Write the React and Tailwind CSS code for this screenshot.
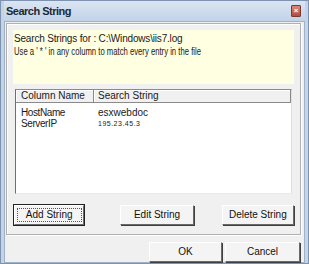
import React from 'react';

const font = "font-['Liberation_Sans',Arial,sans-serif]";

const Btn = ({ label, focused, className = '' }) => (
    <button
        className={`h-[20px] bg-[#f4f4f4] text-[10px] text-[#111] border border-t-[#fff] border-l-[#fff] border-r-[#6a6a6a] border-b-[#6a6a6a] shadow-[1px_1px_0_#404040] flex items-center justify-center ${focused ? 'outline outline-1 outline-[#222]' : ''} ${className}`}
    >
        <span className={focused ? 'border border-dotted border-[#555] px-[8px] leading-[12px]' : 'leading-[12px]'}>{label}</span>
    </button>
);

const App = () => {
    const rows = [
        { name: 'HostName', value: 'esxwebdoc', small: false },
        { name: 'ServerIP', value: '195.23.45.3', small: true },
    ];

    return (
        <div className={`w-[309px] h-[264px] bg-[#c4d4e8] border border-[#7d93b0] flex flex-col px-[3px] pb-[2px] ${font}`}>
            {/* title bar */}
            <div className="h-[20px] shrink-0 flex items-center justify-between pl-[2px] pr-[4px] bg-gradient-to-b from-[#dbe5f2] to-[#c2d3e8]">
                <span className="text-[11px] font-semibold text-[#1c2a3a] tracking-[-0.5px]">Search String</span>
                <div className="w-[10px] h-[12px] bg-gradient-to-b from-[#d98b7e] to-[#b5493a] border border-[#7a3a32] rounded-[1px] flex items-center justify-center">
                    <span className="text-[8px] leading-none text-white font-bold">×</span>
                </div>
            </div>

            {/* body */}
            <div className="flex-1 bg-[#f0f0f0] border border-[#9fb1c7] flex flex-col pt-[1px] pl-[1px] pr-[3px]">
                <div className="border border-[#b0b0b0] shadow-[inset_1px_1px_0_#fff,1px_1px_0_#fff] flex flex-col px-[6px] pt-[6px] pb-[9px]">
                    {/* info panel */}
                    <div className="h-[54px] bg-[#ffffe1] pl-[1px] pt-[2px] text-[10px] leading-[13px] text-[#1a1a1a]">
                        <div className="tracking-[-0.18px]">Search Strings for : C:\Windows\iis7.log</div>
                        <div className="inline-block whitespace-nowrap origin-left scale-x-[0.77]">Use a ' * ' in any column to match every entry in the file</div>
                    </div>

                    {/* list */}
                    <div className="mt-[5px] mx-[2px] h-[105px] bg-white border border-t-[#8a8a8a] border-l-[#6f6f6f] border-r-[#e0e0e0] border-b-[#e8e8e8] flex flex-col">
                        <div className="h-[13px] flex text-[10px] leading-[12px] text-[#1a1a1a] bg-[#f0f0f0] border-b border-[#8a8a8a]">
                            <div className="w-[78px] pl-[5px] border-r border-[#8a8a8a] shadow-[inset_1px_1px_0_#fff]">Column Name</div>
                            <div className="flex-1 pl-[4px] border-r border-[#8a8a8a] shadow-[inset_1px_1px_0_#fff]">Search String</div>
                        </div>
                        <div className="pt-[4px] text-[10px] text-[#1a1a1a]">
                            {rows.map((r) => (
                                <div key={r.name} className="h-[11px] flex items-center">
                                    <div className="w-[78px] pl-[5px] leading-[11px] tracking-[-0.4px]">{r.name}</div>
                                    <div className={`pl-[4px] ${r.small ? 'text-[7px] tracking-[0.5px] pt-[2px]' : 'leading-[11px]'}`}>{r.value}</div>
                                </div>
                            ))}
                        </div>
                    </div>

                    {/* row buttons */}
                    <div className="mt-[11px] flex items-center pl-[1px]">
                        <Btn label="Add String" focused className="w-[71px]" />
                        <Btn label="Edit String" className="w-[74px] ml-[36px]" />
                        <Btn label="Delete String" className="w-[73px] ml-[28px]" />
                    </div>
                </div>

                {/* dialog buttons */}
                <div className="mt-[7px] flex justify-end pr-[1px]">
                    <Btn label="OK" className="w-[73px] h-[19px]" />
                    <Btn label="Cancel" className="w-[75px] h-[19px] ml-[3px]" />
                </div>
            </div>
        </div>
    );
};

export default App;
